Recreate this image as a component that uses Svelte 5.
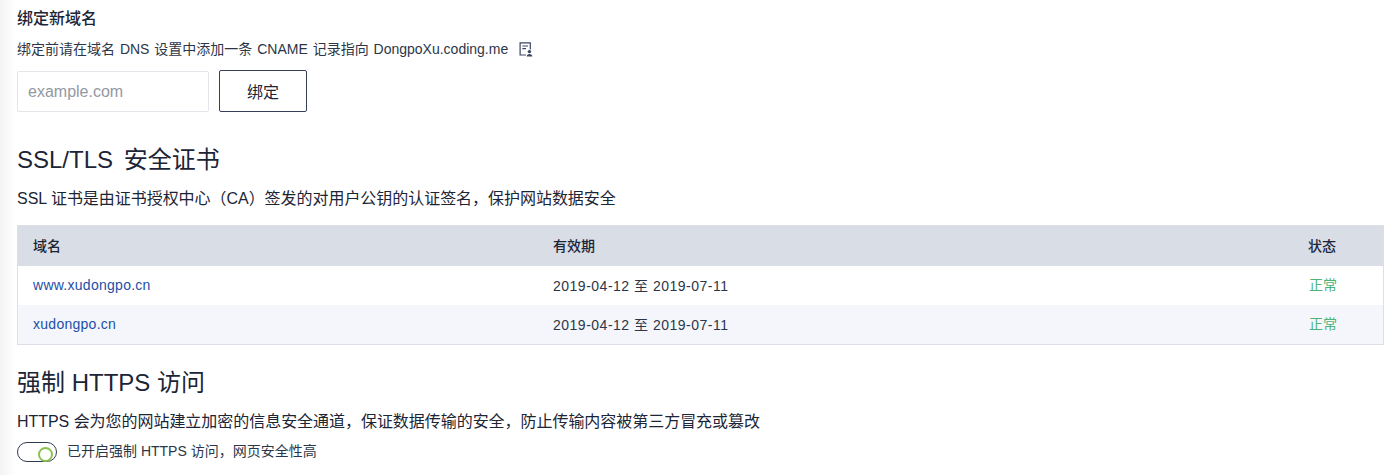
<script>
  const certs = [
    { domain: "www.xudongpo.cn", period: "2019-04-12 至 2019-07-11", status: "正常" },
    { domain: "xudongpo.cn", period: "2019-04-12 至 2019-07-11", status: "正常" },
  ];
</script>

<main>
  <h4>绑定新域名</h4>
  <p class="hint">
    绑定前请在域名 DNS 设置中添加一条 CNAME 记录指向 DongpoXu.coding.me
    <svg class="copy" width="14" height="15" viewBox="0 0 14 15" fill="none" stroke="#3a4660" stroke-width="1.2">
      <path d="M7 13H1.1V.9h10.2v6.5" />
      <path d="M3.4 4h5.6M3.4 6.6h3.6" />
      <circle cx="10.4" cy="9.6" r="1.7" fill="#3a4660" stroke="none" />
      <path d="M7.6 14.6c0-3.4 5.8-3.4 5.8 0z" fill="#3a4660" stroke="none" />
    </svg>
  </p>
  <div class="bind">
    <input placeholder="example.com" />
    <button>绑定</button>
  </div>

  <h2 class="ssl">SSL/TLS 安全证书</h2>
  <p class="desc">SSL 证书是由证书授权中心（CA）签发的对用户公钥的认证签名，保护网站数据安全</p>
  <table>
    <thead>
      <tr>
        <th class="c1">域名</th>
        <th class="c2">有效期</th>
        <th class="c3">状态</th>
      </tr>
    </thead>
    <tbody>
      {#each certs as cert}
        <tr>
          <td class="domain"><a href="#top">{cert.domain}</a></td>
          <td class="period">{cert.period}</td>
          <td class="ok">{cert.status}</td>
        </tr>
      {/each}
    </tbody>
  </table>

  <h2 class="https">强制 HTTPS 访问</h2>
  <p class="desc">HTTPS 会为您的网站建立加密的信息安全通道，保证数据传输的安全，防止传输内容被第三方冒充或篡改</p>
  <div class="force">
    <span class="switch"><span class="knob"></span></span>
    <span class="force-label">已开启强制 HTTPS 访问，网页安全性高</span>
  </div>
</main>

<style>
  :global(body) {
    background: #fff;
  }

  main {
    box-sizing: border-box;
    width: 1400px;
    height: 475px;
    overflow: hidden;
    padding: 9px 16px 0 17px;
    color: #1c2536;
    font-family: "Liberation Sans", "Noto Sans CJK SC", sans-serif;
    background: linear-gradient(to right, #f3f3f3, #fff 16px);
  }

  h4 {
    margin: 0;
    font-size: 16px;
    line-height: 20px;
    font-weight: 500;
  }

  .hint {
    margin: 11px 0 0;
    font-size: 14px;
    line-height: 18px;
    display: flex;
    align-items: center;
    color: #2c3648;
    word-spacing: 1px;
  }

  .copy {
    margin-left: 11px;
  }

  .bind {
    display: flex;
    gap: 10px;
    margin-top: 12px;
  }

  input {
    box-sizing: border-box;
    align-self: flex-end;
    width: 192px;
    height: 41px;
    padding: 0 10px;
    border: 1px solid #e3e5ea;
    border-radius: 2px;
    font-family: inherit;
    font-size: 16px;
    background: #fff;
  }

  input::placeholder {
    color: #9398a3;
  }

  button {
    box-sizing: border-box;
    width: 88px;
    height: 42px;
    padding-bottom: 2px;
    border: 1px solid #34405a;
    border-radius: 2px;
    background: #fff;
    color: #1c2536;
    font-family: inherit;
    font-size: 16px;
  }

  h2 {
    margin: 0;
    font-size: 24px;
    line-height: 30px;
    font-weight: 400;
  }

  .ssl {
    margin-top: 33px;
    word-spacing: 4px;
  }

  .https {
    margin-top: 23px;
  }

  .desc {
    margin: 14px 0 0;
    font-size: 16px;
    line-height: 20px;
    letter-spacing: -0.04px;
  }

  table {
    width: 1367px;
    margin-top: 16px;
    border-collapse: collapse;
    table-layout: fixed;
    border: 1px solid #dcdfe6;
    font-size: 14px;
  }

  th {
    height: 37px;
    padding: 0 15px 3px;
    background: #d9dde6;
    text-align: left;
    font-weight: 500;
  }

  td {
    height: 37px;
    padding: 0 15px 2px;
    color: #2c3648;
  }

  tbody tr:nth-child(2) {
    background: #f4f6fb;
  }

  .c1 {
    width: 490px;
  }

  .c3 {
    width: 60px;
  }

  a {
    color: #1d4fa8;
    text-decoration: none;
  }

  .domain {
    letter-spacing: 0.27px;
  }

  .period {
    letter-spacing: 0.5px;
  }

  td.ok {
    color: #4cb477;
    padding: 0 14px 3px 16px;
    height: 36px;
  }

  .force {
    display: flex;
    align-items: flex-start;
    gap: 10px;
    margin-top: 9px;
    font-size: 14px;
    color: #2c3648;
  }

  .force-label {
    line-height: 20px;
  }

  .switch {
    box-sizing: border-box;
    display: flex;
    justify-content: flex-end;
    align-items: flex-end;
    width: 40px;
    height: 20px;
    margin-top: 1px;
    border: 1.5px solid #2f3a52;
    border-radius: 10px;
    background: #fff;
  }

  .knob {
    box-sizing: border-box;
    width: 15px;
    height: 15px;
    margin-right: 3px;
    margin-bottom: -1px;
    border: 2px solid #8cc152;
    border-radius: 50%;
    background: #fff;
  }
</style>
